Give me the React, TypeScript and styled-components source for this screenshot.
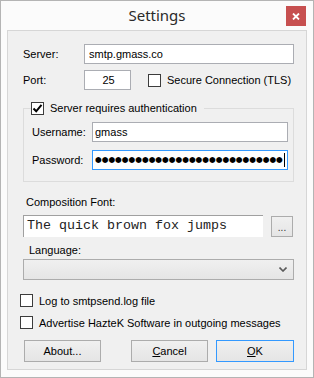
import styled, { createGlobalStyle } from "styled-components";

const GlobalStyle = createGlobalStyle`
  html, body {
    margin: 0;
    padding: 0;
    background: #ffffff;
  }
  body {
    font-family: "Liberation Sans", Arial, sans-serif;
    font-size: 11px;
    color: #000000;
  }
`;

const CheckIcon = () => (
  <svg width="11" height="11" viewBox="0 0 11 11">
    <path d="M1.5 5.5 L4.2 8.3 L9.5 1.8" fill="none" stroke="#000" strokeWidth="2" />
  </svg>
);

const CheckBox = ({ checked }: { checked?: boolean }) => (
  <Box>{checked && <CheckIcon />}</Box>
);

const App = (): JSX.Element => {
  return (
    <>
      <GlobalStyle />
      <Window>
        <TitleBar>
          <span />
          <Title>Settings</Title>
          <CloseButton>
            <svg width="8" height="7" viewBox="0 0 8 7">
              <path d="M1 0.5 L7 6.5 M7 0.5 L1 6.5" stroke="#fff" strokeWidth="1.8" />
            </svg>
          </CloseButton>
        </TitleBar>
        <Client>
          <Row>
            <Label width={61}>Server:</Label>
            <TextInput readOnly value="smtp.gmass.co" pad={4} />
          </Row>
          <Row top={6}>
            <Label width={61}>Port:</Label>
            <TextInput readOnly value="25" boxWidth={47} center />
            <CheckLabel left={17}>
              <CheckBox />
              Secure Connection (TLS)
            </CheckLabel>
          </Row>
          <Group>
            <Legend>
              <CheckBox checked />
              Server requires authentication
            </Legend>
            <Row top={7}>
              <Label width={61} indent={1}>
                Username:
              </Label>
              <TextInput readOnly value="gmass" pad={2} />
            </Row>
            <Row top={8}>
              <Label width={61} indent={1}>
                Password:
              </Label>
              <PasswordBox>
                <Dots>{"●".repeat(28)}</Dots>
                <Caret />
              </PasswordBox>
            </Row>
          </Group>
          <Caption top={14} indent={3}>
            Composition Font:
          </Caption>
          <FontRow>
            <FontSample>The quick brown fox jumps</FontSample>
            <SmallButton>...</SmallButton>
          </FontRow>
          <Caption top={7} indent={6}>
            Language:
          </Caption>
          <Combo>
            <svg width="8" height="5" viewBox="0 0 8 5">
              <path d="M0.5 0.5 L4 4 L7.5 0.5" fill="none" stroke="#5a5a5a" strokeWidth="1.6" />
            </svg>
          </Combo>
          <CheckLabel top={14} left={-3}>
            <CheckBox />
            Log to smtpsend.log file
          </CheckLabel>
          <CheckLabel top={9} left={-3}>
            <CheckBox />
            Advertise HazteK Software in outgoing messages
          </CheckLabel>
          <ButtonRow>
            <Button>About...</Button>
            <Button left={30}>
              <u>C</u>ancel
            </Button>
            <Button left={8} primary>
              <u>O</u>K
            </Button>
          </ButtonRow>
        </Client>
      </Window>
    </>
  );
};

const Window = styled.div`
  width: 314px;
  height: 378px;
  box-sizing: border-box;
  border: 1px solid #b4b4b4;
  background: #fbfbfb;
  padding: 0 6px 7px;
  display: flex;
  flex-direction: column;
`;

const TitleBar = styled.div`
  height: 29px;
  display: grid;
  grid-template-columns: 1fr auto 1fr;
  align-items: start;
`;

const Title = styled.div`
  font-family: "Noto Sans", "Open Sans", sans-serif;
  font-size: 15px;
  line-height: 29px;
  color: #2a2a2a;
`;

const CloseButton = styled.div`
  justify-self: end;
  margin-top: 5px;
  margin-right: 1px;
  width: 20px;
  height: 20px;
  background: #c75050;
  display: flex;
  align-items: center;
  justify-content: center;
`;

const Client = styled.div`
  height: 340px;
  box-sizing: border-box;
  border: 1px solid #d6d6d6;
  background: #f0f0f0;
  padding: 13px 12px 0 15px;
  display: flex;
  flex-direction: column;
  align-items: stretch;
`;

const Row = styled.div<{ top?: number }>`
  display: flex;
  align-items: center;
  height: 20px;
  margin-top: ${(p) => p.top ?? 0}px;
`;

const Label = styled.span<{ width: number; indent?: number }>`
  width: ${(p) => p.width - (p.indent ?? 0)}px;
  padding-left: ${(p) => p.indent ?? 0}px;
  flex: none;
`;

const TextInput = styled.input<{ boxWidth?: number; pad?: number; center?: boolean }>`
  box-sizing: border-box;
  height: 20px;
  ${(p) => (p.boxWidth ? `width: ${p.boxWidth}px; flex: none;` : "flex: 1; min-width: 0;")}
  margin: 0;
  border: 1px solid #abadb3;
  background: #ffffff;
  padding: 0 0 0 ${(p) => p.pad ?? 2}px;
  font-family: "Liberation Sans", Arial, sans-serif;
  font-size: 11px;
  color: #000000;
  text-align: ${(p) => (p.center ? "center" : "left")};
  outline: none;
`;

const PasswordBox = styled.div`
  flex: 1;
  min-width: 0;
  box-sizing: border-box;
  height: 20px;
  border: 1px solid #3399ff;
  background: #ffffff;
  padding-left: 2px;
  display: flex;
  align-items: center;
  overflow: hidden;
`;

const Dots = styled.span`
  font-family: "DejaVu Sans", sans-serif;
  font-size: 7.7px;
  letter-spacing: 0;
  line-height: 10px;
  color: #000000;
  white-space: nowrap;
`;

const Caret = styled.span`
  flex: none;
  width: 1px;
  height: 14px;
  background: #000000;
  margin-left: 1px;
`;

const Box = styled.span`
  box-sizing: border-box;
  width: 13px;
  height: 13px;
  border: 1px solid #3c3c3c;
  background: #ffffff;
  display: inline-flex;
  align-items: center;
  justify-content: center;
  flex: none;
`;

const CheckLabel = styled.label<{ top?: number; left?: number }>`
  display: flex;
  align-items: center;
  gap: 6px;
  height: 13px;
  margin-top: ${(p) => p.top ?? 0}px;
  margin-left: ${(p) => p.left ?? 0}px;
  white-space: nowrap;
`;

const Group = styled.fieldset`
  margin: 11px 0 0;
  padding: 0 5px 11px 7px;
  border: 1px solid #dcdcdc;
  min-width: 0;
`;

const Legend = styled.legend`
  display: flex;
  align-items: center;
  gap: 6px;
  height: 14px;
  padding: 0 7px 0 0;
  margin: 0;
`;

const Caption = styled.div<{ top: number; indent: number }>`
  line-height: 13px;
  margin-top: ${(p) => p.top}px;
  margin-left: ${(p) => p.indent}px;
`;

const FontRow = styled.div`
  display: flex;
  align-items: flex-start;
  margin-top: 6px;
  height: 22px;
`;

const FontSample = styled.div`
  box-sizing: border-box;
  width: 240px;
  height: 22px;
  background: #ffffff;
  border-top: 1px solid #a0a0a0;
  border-left: 1px solid #a0a0a0;
  padding-left: 3px;
  font-family: "Liberation Mono", "Courier New", monospace;
  font-size: 13.33px;
  font-weight: normal;
  line-height: 20px;
  color: #222222;
  white-space: nowrap;
`;

const SmallButton = styled.div`
  box-sizing: border-box;
  width: 22px;
  height: 21px;
  margin: 1px 1px 0 auto;
  border: 1px solid #acacac;
  background: linear-gradient(#f0f0f0, #e5e5e5);
  display: flex;
  align-items: flex-end;
  justify-content: center;
  padding-bottom: 3px;
  font-size: 10px;
  color: #333333;
`;

const Combo = styled.div`
  box-sizing: border-box;
  height: 21px;
  margin-top: 2px;
  border: 1px solid #acacac;
  background: linear-gradient(#f0f0f0, #e5e5e5);
  display: flex;
  align-items: center;
  justify-content: flex-end;
  padding-right: 6px;
`;

const ButtonRow = styled.div`
  display: flex;
  margin-top: 11px;
  margin-left: 1px;
`;

const Button = styled.div<{ left?: number; primary?: boolean }>`
  box-sizing: border-box;
  width: ${(p) => (p.primary ? 78 : 77)}px;
  height: 22px;
  margin-left: ${(p) => p.left ?? 0}px;
  border: 1px solid ${(p) => (p.primary ? "#3399ff" : "#acacac")};
  background: linear-gradient(#f0f0f0, #e5e5e5);
  display: flex;
  align-items: center;
  justify-content: center;
  color: #000000;
`;

export default App;
